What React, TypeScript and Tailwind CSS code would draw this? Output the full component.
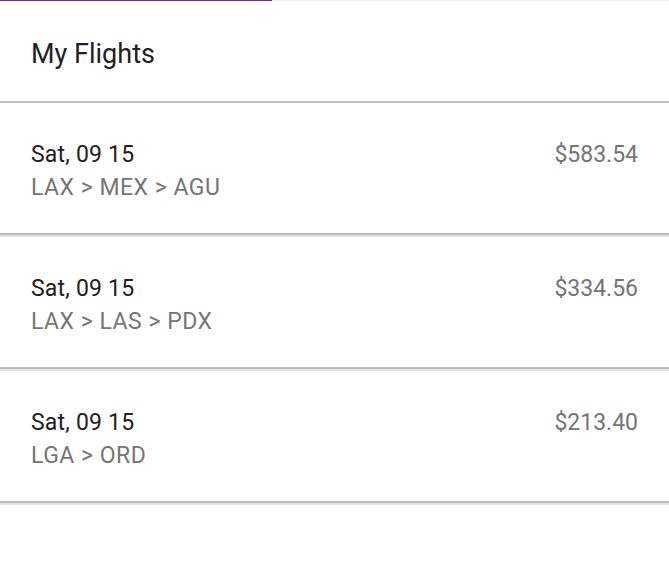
const flights = [
  { date: "Sat, 09 15", route: "LAX > MEX > AGU", price: "$583.54" },
  { date: "Sat, 09 15", route: "LAX > LAS > PDX", price: "$334.56" },
  { date: "Sat, 09 15", route: "LGA > ORD", price: "$213.40" },
];

const App = () => {
  return (
    <div className="min-h-[563px] bg-white font-['Roboto',sans-serif]">
      {/* progress bar */}
      <div className="flex h-px bg-[#eeeeee]">
        <div className="w-[272px] bg-[#6a2d91]" />
      </div>

      {/* Header */}
      <div className="h-[102px] px-[31px] pt-[37px] border-b-2 border-[#c2c2c2]">
        <h1 className="text-[27px] leading-[32px] text-[#212121]">My Flights</h1>
      </div>

      {/* Flight rows */}
      {flights.map((flight, i) => (
        <div key={i}>
          <div className="h-[130px] flex justify-between px-[31px] pt-[35px]">
            <div>
              <p className="text-[23px] leading-[33px] tracking-[0.2px] text-[#212121]">{flight.date}</p>
              <p className="text-[23px] leading-[33px] tracking-[0.5px] text-[#757575]">{flight.route}</p>
            </div>
            <p className="text-[23px] leading-[33px] text-[#757575]">{flight.price}</p>
          </div>
          <div className="h-[2px] bg-[#bdbdbd]" />
          <div className="h-[2px] bg-[#e2e2e2]" />
        </div>
      ))}
    </div>
  );
};

export default App;
